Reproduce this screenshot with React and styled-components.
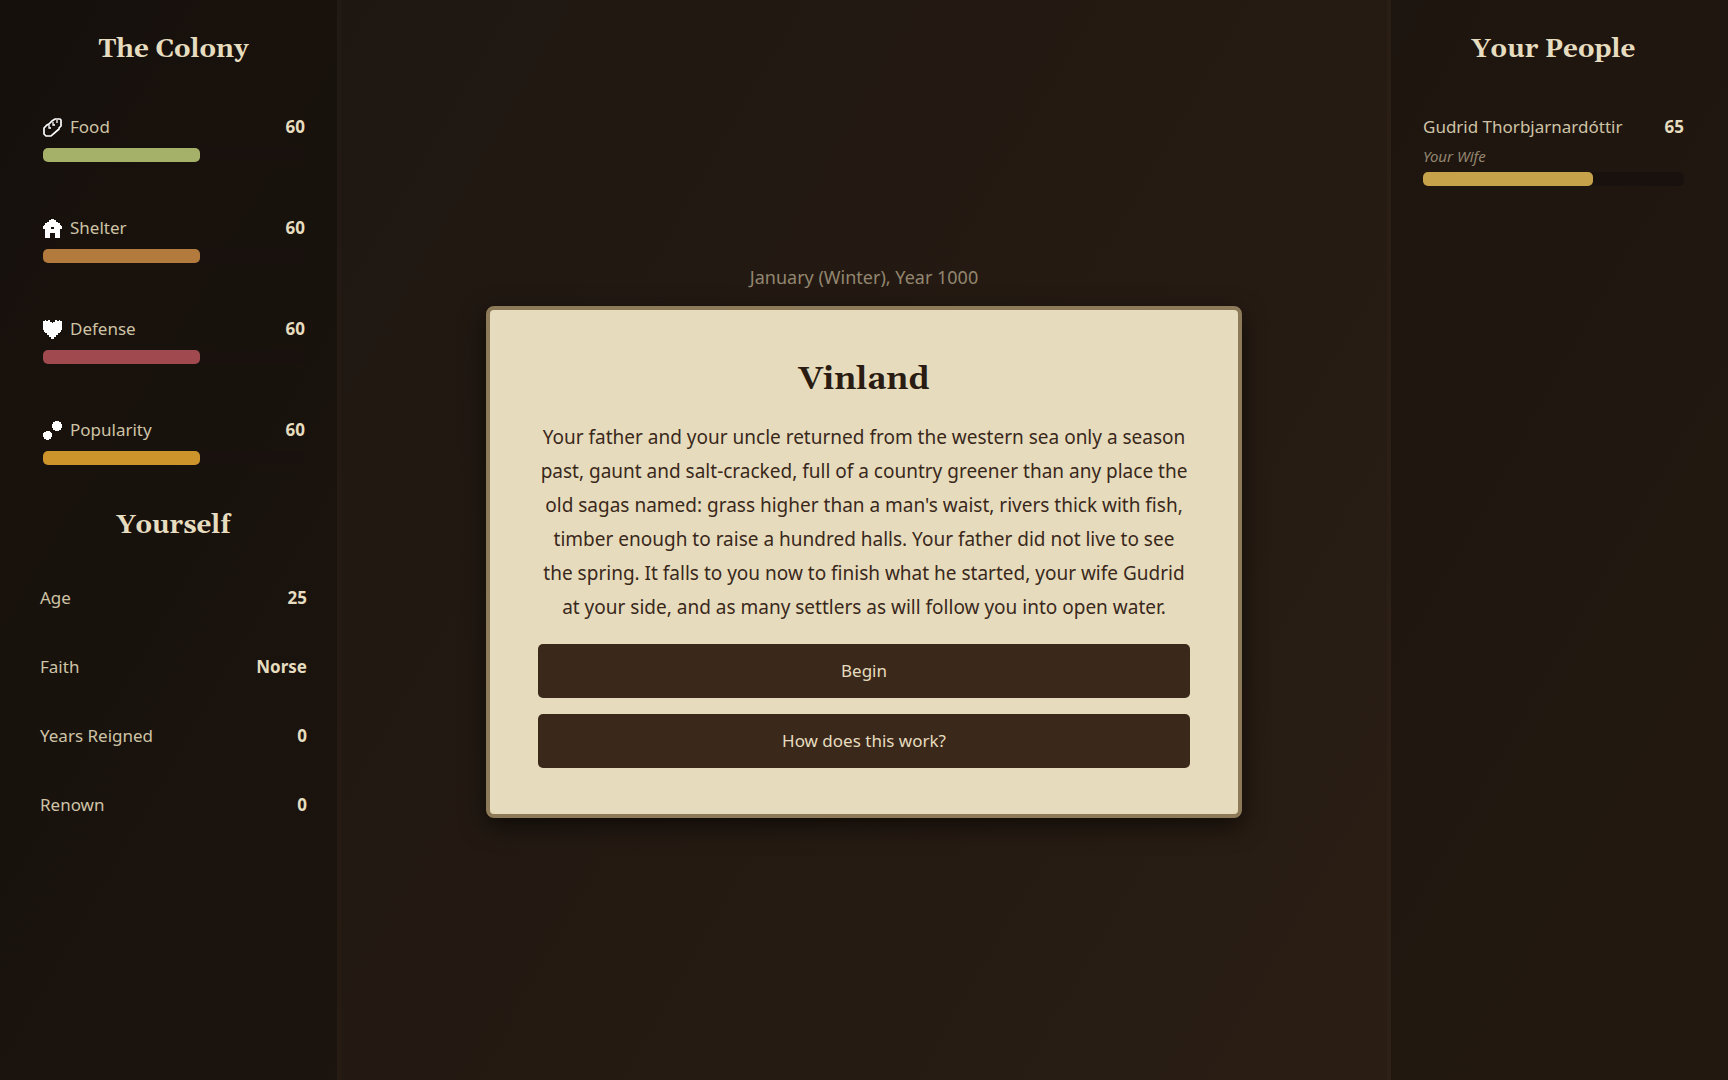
import React from 'react';
import styled, { createGlobalStyle } from 'styled-components';

const GlobalStyle = createGlobalStyle`
  * {
    box-sizing: border-box;
  }
  body {
    margin: 0;
    color: #e6dcbf;
    background: #1f170f;
    font-family: 'Noto Sans', 'Open Sans', sans-serif;
    font-size: 17px;
  }
`;

const resources = [
  { name: 'Food', value: 60, color: '#a5b068', icon: 'food' },
  { name: 'Shelter', value: 60, color: '#b27a3c', icon: 'shelter' },
  { name: 'Defense', value: 60, color: '#a04a50', icon: 'defense' },
  { name: 'Popularity', value: 60, color: '#cc942a', icon: 'popularity' }
];

const traits = [
  { name: 'Age', value: '25' },
  { name: 'Faith', value: 'Norse' },
  { name: 'Years Reigned', value: '0' },
  { name: 'Renown', value: '0' }
];

const people = [{ name: 'Gudrid Thorbjarnardóttir', role: 'Your Wife', value: 65, color: '#c6a34a' }];

const Icon = ({ name }) => (
  <IconSvg viewBox="0 0 19 19" aria-hidden="true">
    {name === 'food' && (
      <g fill="none" stroke="#fff" strokeWidth="1.7">
        <path d="M12 1H17L18 2V8L16 10V11L9 17L8 18H3L1 16V10L4 7L6 6L9 3Z" />
        <path d="M6 7V10H8M10 4V7H12M14 2V5" strokeWidth="1.3" />
      </g>
    )}
    {name === 'shelter' && (
      <path
        fill="#fff"
        fillRule="evenodd"
        d="M8 0H11V1H13V3H15V4H17V6H18V7H19V10H17V19H12V14H7V19H2V10H0V7H1V6H2V4H4V3H6V1H8ZM8 8V10H11V8Z"
      />
    )}
    {name === 'defense' && (
      <path
        fill="#fff"
        d="M0 1H2V0H3V1H5V0H7V2H9V3H10V2H12V0H14V1H16V0H17V1H19V10H18V12H17V13H15V15H13V17H11V19H8V17H6V15H4V13H2V12H1V10H0Z"
      />
    )}
    {name === 'popularity' && (
      <g fill="#fff">
        <path d="M12 0H16V1H18V3H19V7H18V9H16V10H12V9H10V7H9V3H10V1H12Z" />
        <path d="M3 10H7V11H8V12H9V16H8V18H6V19H3V18H1V16H0V12H1V11H3Z" />
      </g>
    )}
  </IconSvg>
);

const Meter = ({ label, value, color }) => (
  <Track role="meter" aria-label={label} aria-valuenow={value} aria-valuemin={0} aria-valuemax={100}>
    <Fill color={color} style={{ width: `${value}%` }} />
  </Track>
);

const App = () => (
  <>
    <GlobalStyle />
    <Layout>
      <Side>
        <SideTitle>The Colony</SideTitle>
        <Stats>
          {resources.map(({ name, value, color, icon }) => (
            <Stat key={name}>
              <Line>
                <Label>
                  <Icon name={icon} />
                  {name}
                </Label>
                <Value>{value}</Value>
              </Line>
              <Meter label={name} value={value} color={color} />
            </Stat>
          ))}
        </Stats>
        <SideTitle>Yourself</SideTitle>
        <Traits>
          {traits.map(({ name, value }) => (
            <Line key={name}>
              <Label>{name}</Label>
              <Value>{value}</Value>
            </Line>
          ))}
        </Traits>
      </Side>
      <Main>
        <DateText>January (Winter), Year 1000</DateText>
        <Card>
          <CardTitle>Vinland</CardTitle>
          <Story>
            Your father and your uncle returned from the western sea only a season past, gaunt and salt-cracked, full
            of a country greener than any place the old sagas named: grass higher than a man's waist, rivers thick
            with fish, timber enough to raise a hundred halls. Your father did not live to see the spring. It falls to
            you now to finish what he started, your wife Gudrid at your side, and as many settlers as will follow you
            into open water.
          </Story>
          <Choices>
            <Choice type="button">Begin</Choice>
            <Choice type="button">How does this work?</Choice>
          </Choices>
        </Card>
      </Main>
      <Side $right>
        <SideTitle>Your People</SideTitle>
        <Stats $right>
          {people.map(({ name, role, value, color }) => (
            <Stat key={name}>
              <Line>
                <Label>{name}</Label>
                <Value>{value}</Value>
              </Line>
              <Role>{role}</Role>
              <Meter label={name} value={value} color={color} />
            </Stat>
          ))}
        </Stats>
      </Side>
    </Layout>
  </>
);

const Layout = styled.div`
  display: grid;
  grid-template-columns: 341px 1fr 341px;
  min-height: 100vh;
  background: linear-gradient(120deg, #1c1510 0%, #2c1f15 100%);
`;
const Side = styled.aside`
  padding: ${props => (props.$right ? '34px 44px 32px 32px' : '34px 30px 32px 40px')};
  border: solid rgba(255, 220, 170, 0.02);
  border-width: ${props => (props.$right ? '0 0 0 4px' : '0 4px 0 0')};
  background: rgba(0, 0, 0, 0.2);
  background-clip: padding-box;
`;
const SideTitle = styled.h2`
  margin: 0;
  font-family: Gelasio, Georgia, 'DejaVu Serif', serif;
  font-size: 26px;
  line-height: 32px;
  font-weight: 700;
  text-align: center;
`;
const Stats = styled.div`
  display: grid;
  gap: 53px;
  padding: ${props => (props.$right ? '48px 0' : '48px 2px 45px 3px')};
`;
const Stat = styled.div`
  display: flex;
  flex-direction: column;
`;
const Line = styled.div`
  display: flex;
  justify-content: space-between;
  align-items: center;
  line-height: 26px;
`;
const Label = styled.span`
  display: flex;
  align-items: center;
  gap: 8px;
  color: #cfc3a6;
`;
const Value = styled.strong`
  font-weight: 700;
`;
const Role = styled.em`
  margin-top: 4px;
  color: #93866f;
  font-size: 15px;
  line-height: 24px;
`;
const IconSvg = styled.svg`
  width: 19px;
  height: 19px;
`;
const Track = styled.div`
  height: 14px;
  margin-top: 8px;
  border-radius: 5px;
  background: #19110e;
  ${Role} + & {
    margin-top: 4px;
  }
`;
const Fill = styled.div`
  height: 100%;
  border-radius: 5px;
  background: ${props => props.color};
`;
const Traits = styled.div`
  display: grid;
  gap: 43px;
  padding-top: 43px;
`;
const Main = styled.main`
  display: flex;
  flex-direction: column;
  align-items: center;
  justify-content: center;
  padding: 26px 24px 24px;
`;
const DateText = styled.p`
  margin: 0 0 16px;
  color: #93866f;
  font-size: 18px;
  line-height: 26px;
`;
const Card = styled.section`
  width: 100%;
  max-width: 756px;
  padding: 48px 48px 46px;
  border: 4px solid #8c7a58;
  border-radius: 8px;
  background: #e6dcbd;
  box-shadow: 0 8px 24px rgba(0, 0, 0, 0.6);
  text-align: center;
`;
const CardTitle = styled.h1`
  margin: 0 0 18px;
  color: #2a1c12;
  font-family: Gelasio, Georgia, 'DejaVu Serif', serif;
  font-size: 32px;
  line-height: 44px;
  font-weight: 700;
`;
const Story = styled.p`
  margin: 0 0 20px;
  color: #3a281b;
  font-size: 19px;
  line-height: 34px;
`;
const Choices = styled.div`
  display: grid;
  gap: 16px;
`;
const Choice = styled.button`
  padding: 14px 20px;
  border: 0;
  border-radius: 5px;
  color: #e6dcbf;
  background: #3a281b;
  font: inherit;
  line-height: 26px;
  cursor: pointer;
`;

export default App;
